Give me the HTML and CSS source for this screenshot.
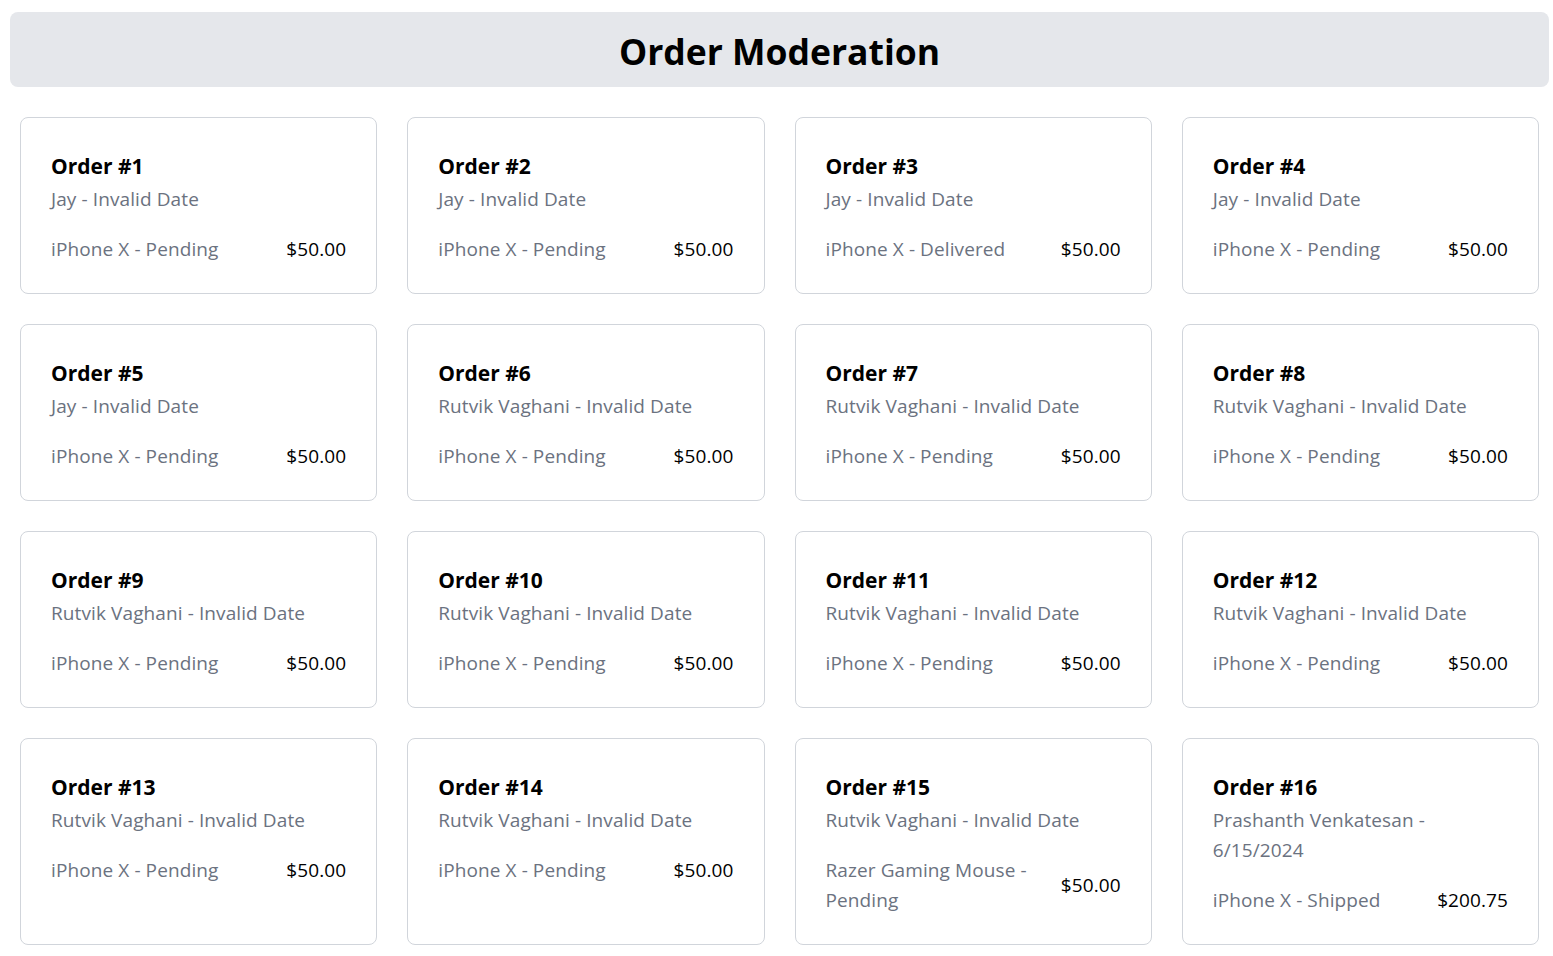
FILE: index.html
```html
<!DOCTYPE html>
<html lang="en">
<head>
<meta charset="utf-8">
<title>Order Moderation</title>
<link rel="stylesheet" href="styles.css">
</head>
<body>
<div class="page">
  <header class="header"><h1 class="title">Order Moderation</h1></header>
  <main class="grid">
    <div class="card"><h2 class="order">Order #1</h2><p class="meta">Jay - Invalid Date</p><div class="row"><span class="item">iPhone X - Pending</span><span class="price">$50.00</span></div></div>
    <div class="card"><h2 class="order">Order #2</h2><p class="meta">Jay - Invalid Date</p><div class="row"><span class="item">iPhone X - Pending</span><span class="price">$50.00</span></div></div>
    <div class="card"><h2 class="order">Order #3</h2><p class="meta">Jay - Invalid Date</p><div class="row"><span class="item">iPhone X - Delivered</span><span class="price">$50.00</span></div></div>
    <div class="card"><h2 class="order">Order #4</h2><p class="meta">Jay - Invalid Date</p><div class="row"><span class="item">iPhone X - Pending</span><span class="price">$50.00</span></div></div>
    <div class="card"><h2 class="order">Order #5</h2><p class="meta">Jay - Invalid Date</p><div class="row"><span class="item">iPhone X - Pending</span><span class="price">$50.00</span></div></div>
    <div class="card"><h2 class="order">Order #6</h2><p class="meta">Rutvik Vaghani - Invalid Date</p><div class="row"><span class="item">iPhone X - Pending</span><span class="price">$50.00</span></div></div>
    <div class="card"><h2 class="order">Order #7</h2><p class="meta">Rutvik Vaghani - Invalid Date</p><div class="row"><span class="item">iPhone X - Pending</span><span class="price">$50.00</span></div></div>
    <div class="card"><h2 class="order">Order #8</h2><p class="meta">Rutvik Vaghani - Invalid Date</p><div class="row"><span class="item">iPhone X - Pending</span><span class="price">$50.00</span></div></div>
    <div class="card"><h2 class="order">Order #9</h2><p class="meta">Rutvik Vaghani - Invalid Date</p><div class="row"><span class="item">iPhone X - Pending</span><span class="price">$50.00</span></div></div>
    <div class="card"><h2 class="order">Order #10</h2><p class="meta">Rutvik Vaghani - Invalid Date</p><div class="row"><span class="item">iPhone X - Pending</span><span class="price">$50.00</span></div></div>
    <div class="card"><h2 class="order">Order #11</h2><p class="meta">Rutvik Vaghani - Invalid Date</p><div class="row"><span class="item">iPhone X - Pending</span><span class="price">$50.00</span></div></div>
    <div class="card"><h2 class="order">Order #12</h2><p class="meta">Rutvik Vaghani - Invalid Date</p><div class="row"><span class="item">iPhone X - Pending</span><span class="price">$50.00</span></div></div>
    <div class="card"><h2 class="order">Order #13</h2><p class="meta">Rutvik Vaghani - Invalid Date</p><div class="row"><span class="item">iPhone X - Pending</span><span class="price">$50.00</span></div></div>
    <div class="card"><h2 class="order">Order #14</h2><p class="meta">Rutvik Vaghani - Invalid Date</p><div class="row"><span class="item">iPhone X - Pending</span><span class="price">$50.00</span></div></div>
    <div class="card"><h2 class="order">Order #15</h2><p class="meta">Rutvik Vaghani - Invalid Date</p><div class="row"><span class="item">Razer Gaming Mouse - Pending</span><span class="price">$50.00</span></div></div>
    <div class="card"><h2 class="order">Order #16</h2><p class="meta">Prashanth Venkatesan - 6/15/2024</p><div class="row"><span class="item">iPhone X - Shipped</span><span class="price">$200.75</span></div></div>
  </main>
</div>
</body>
</html>
```
FILE: styles.css
```css
* { box-sizing: border-box; }
html, body { margin: 0; padding: 0; background: #ffffff; }
body {
  font-family: "Open Sans", "Noto Sans", "Liberation Sans", sans-serif;
  color: #000;
}
.page { padding: 12px 4px 11px 10px; }
.header {
  background: #e5e7eb;
  border-radius: 8px;
  padding: 19px 0 16px;
  text-align: center;
}
.title {
  margin: 0;
  font-size: 35.5px;
  line-height: 40px;
  font-weight: 700;
}
.grid {
  margin: 30px 10px 0 10px;
  display: grid;
  grid-template-columns: repeat(4, 1fr);
  gap: 30px;
}
.card {
  border: 1px solid #d1d5db;
  border-radius: 8px;
  padding: 30px 30px 29px;
  background: #fff;
}
.order {
  margin: 0;
  font-size: 21px;
  line-height: 36px;
  font-weight: 700;
}
.meta {
  margin: 0 0 20px;
  font-size: 19px;
  line-height: 30px;
  color: #6b7280;
  letter-spacing: 0.1px;
}
.row {
  display: flex;
  justify-content: space-between;
  align-items: center;
  gap: 16px;
  font-size: 19px;
  line-height: 30px;
  letter-spacing: 0.1px;
}
.item { color: #6b7280; }
.price { color: #000; white-space: nowrap; }
```
